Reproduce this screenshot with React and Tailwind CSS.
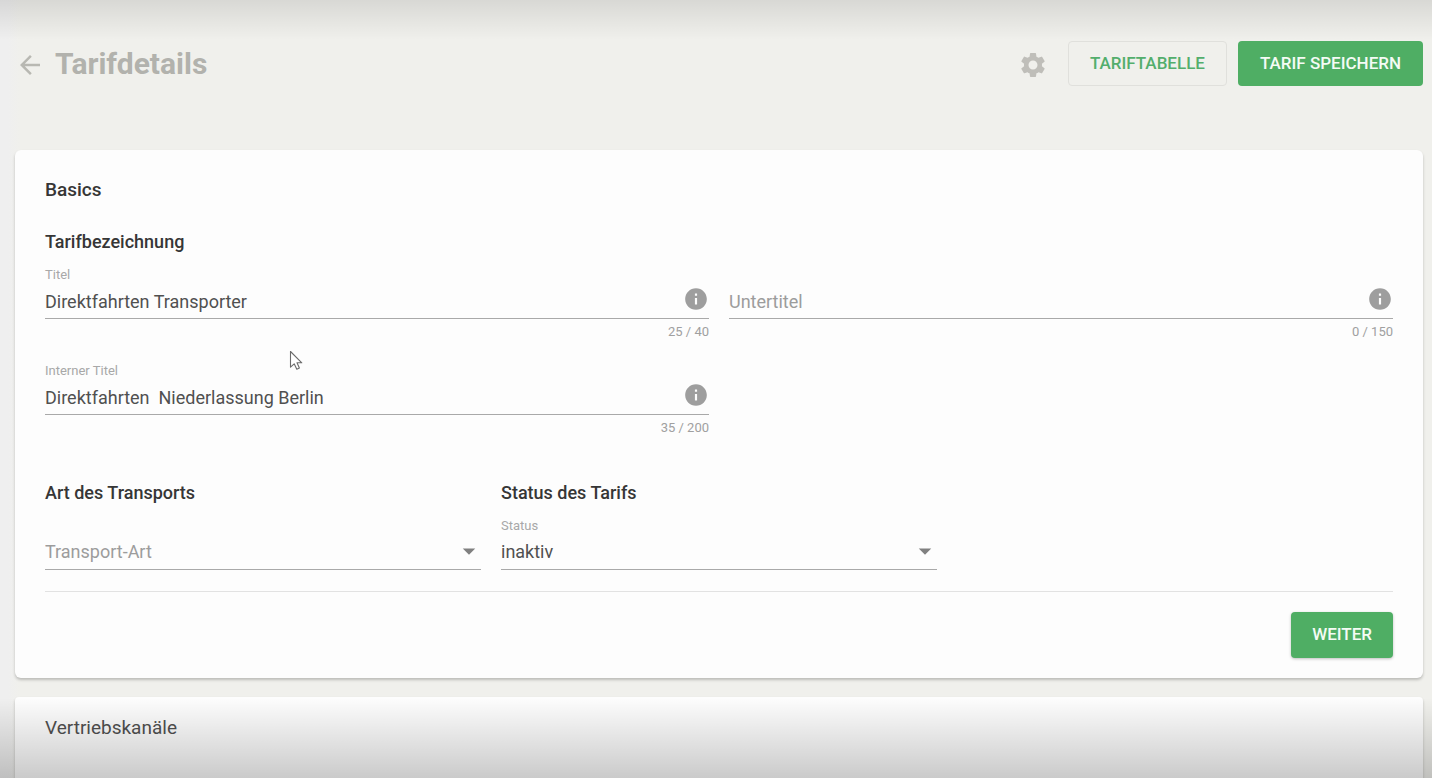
import React, { useId, useState } from "react";
import { MdArrowBack, MdSettings, MdInfo, MdArrowDropDown } from "react-icons/md";

function TextField({ label, initial = "", max }) {
  const id = useId();
  const [value, setValue] = useState(initial);
  return (
    <div className="flex flex-col">
      <label htmlFor={id} className={value ? "h-4 text-[13px] leading-4 text-[#a8a8a8]" : "h-4 text-[13px] leading-4 text-transparent"}>
        {label}
      </label>
      <div className="mt-px flex h-[35px] items-center border-b border-[#a9a9a9]">
        <input
          id={id}
          type="text"
          value={value}
          placeholder={label}
          onChange={(e) => setValue(e.target.value)}
          className="h-full min-w-0 flex-1 bg-transparent text-[18px] text-[#505050] outline-none placeholder:text-[#9c9c9c]"
        />
        <button type="button" aria-label="Info" className="mb-1 text-[#9e9e9e]">
          <MdInfo className="size-[26px]" />
        </button>
      </div>
      <p className="mt-[5px] text-right text-[13px] leading-4 text-[#a0a0a0]">
        {value.length} / {max}
      </p>
    </div>
  );
}

function SelectField({ title, label, initial = "", options }) {
  const id = useId();
  const [value, setValue] = useState(initial);
  return (
    <div className="flex flex-col">
      <h3 className="text-[18px] leading-5 font-medium text-[#363636]">{title}</h3>
      <label htmlFor={id} className={value ? "mt-[15px] h-4 text-[13px] leading-4 text-[#a8a8a8]" : "mt-[15px] h-4 text-[13px] leading-4 text-transparent"}>
        {label}
      </label>
      <div className="relative mt-px h-[35px] border-b border-[#a9a9a9]">
        <select
          id={id}
          value={value}
          onChange={(e) => setValue(e.target.value)}
          className={value ? "h-full w-full appearance-none bg-transparent pb-px text-[18px] text-[#505050] outline-none" : "h-full w-full appearance-none bg-transparent pb-px text-[18px] text-[#9c9c9c] outline-none"}
        >
          {!initial && <option value="">{label}</option>}
          {options.map((o) => (
            <option key={o} value={o}>{o}</option>
          ))}
        </select>
        <MdArrowDropDown className="pointer-events-none absolute top-px -right-[3px] size-[30px] text-[#808080]" />
      </div>
    </div>
  );
}

export default function App() {
  return (
    <div className="relative flex min-h-screen flex-col bg-[linear-gradient(90deg,#efefef_8px,#f0f0ec_20px)] pr-[9px] pl-[15px] font-[Roboto,sans-serif]">
      <header className="flex items-center justify-between pt-[41px]">
        <div className="flex items-center gap-2.5">
          <a href="#zurueck" aria-label="Zurück" className="pt-0.5 text-[#b8b8b2]">
            <MdArrowBack className="size-[30px]" />
          </a>
          <h1 className="text-[30px] leading-9 font-bold text-[#b2b2ad]">Tarifdetails</h1>
        </div>
        <div className="flex items-center">
          <button type="button" aria-label="Einstellungen" className="mr-5 pt-0.5 text-[#bfbeb9]">
            <MdSettings className="size-[30px]" />
          </button>
          <button type="button" className="mr-[11px] h-[45px] rounded border border-[#e0e0dc] px-[21px] text-[17px] font-medium text-[#53ae6c]">
            TARIFTABELLE
          </button>
          <button type="button" className="h-[45px] rounded bg-[#4fae64] px-[22px] text-[17px] font-medium text-[#f4fbf5]">
            TARIF SPEICHERN
          </button>
        </div>
      </header>

      <main className="mt-16 flex flex-1 flex-col gap-[19px]">
        <section className="rounded-md bg-[#fdfdfd] px-[30px] pt-[30px] pb-5 shadow-[0_2px_3px_rgba(0,0,0,0.22)]">
          <h2 className="text-[19px] leading-5 font-medium text-[#363636]">Basics</h2>
          <h3 className="mt-8 text-[18px] leading-5 font-medium text-[#363636]">Tarifbezeichnung</h3>
          <div className="mt-[15px] grid grid-cols-2 gap-x-5 gap-y-[23px]">
            <TextField label="Titel" initial="Direktfahrten Transporter" max={40} />
            <TextField label="Untertitel" max={150} />
            <TextField label="Interner Titel" initial="Direktfahrten  Niederlassung Berlin" max={200} />
          </div>
          <div className="mt-[47px] grid grid-cols-3 gap-x-5">
            <SelectField title="Art des Transports" label="Transport-Art" options={["Direktfahrt", "Stückgut"]} />
            <SelectField title="Status des Tarifs" label="Status" initial="inaktiv" options={["inaktiv", "aktiv"]} />
          </div>
          <hr className="mt-[21px] border-[#e2e2e2]" />
          <div className="mt-5 flex justify-end">
            <button type="button" className="h-[46px] rounded bg-[#4fae64] px-[21px] text-[17px] font-medium text-[#f4fbf5] shadow-[0_1px_3px_rgba(0,0,0,0.25)]">
              WEITER
            </button>
          </div>
        </section>

        <section className="flex-1 rounded-t-sm bg-[#fdfdfd] px-[30px] pt-[21px] shadow-[0_2px_3px_rgba(0,0,0,0.22)]">
          <h2 className="text-[19px] leading-5 text-[#505050]">Vertriebskanäle</h2>
        </section>
      </main>

      <svg viewBox="0 0 14 21" aria-hidden="true" className="pointer-events-none absolute top-[350px] left-[289px] h-[21px] w-[14px]">
        <path d="M1.5 1.5V17.2L5.2 13.8L7.8 19.2L10.4 18L8 12.8H12.8Z" fill="#fff" stroke="#6b6b6b" strokeWidth="1.1" strokeLinejoin="round" />
      </svg>
      <div className="pointer-events-none absolute inset-x-0 top-0 h-10 bg-linear-to-b from-black/10 to-transparent" />
      <div className="pointer-events-none absolute inset-x-0 bottom-0 h-20 bg-linear-to-b from-transparent to-black/20" />
    </div>
  );
}
